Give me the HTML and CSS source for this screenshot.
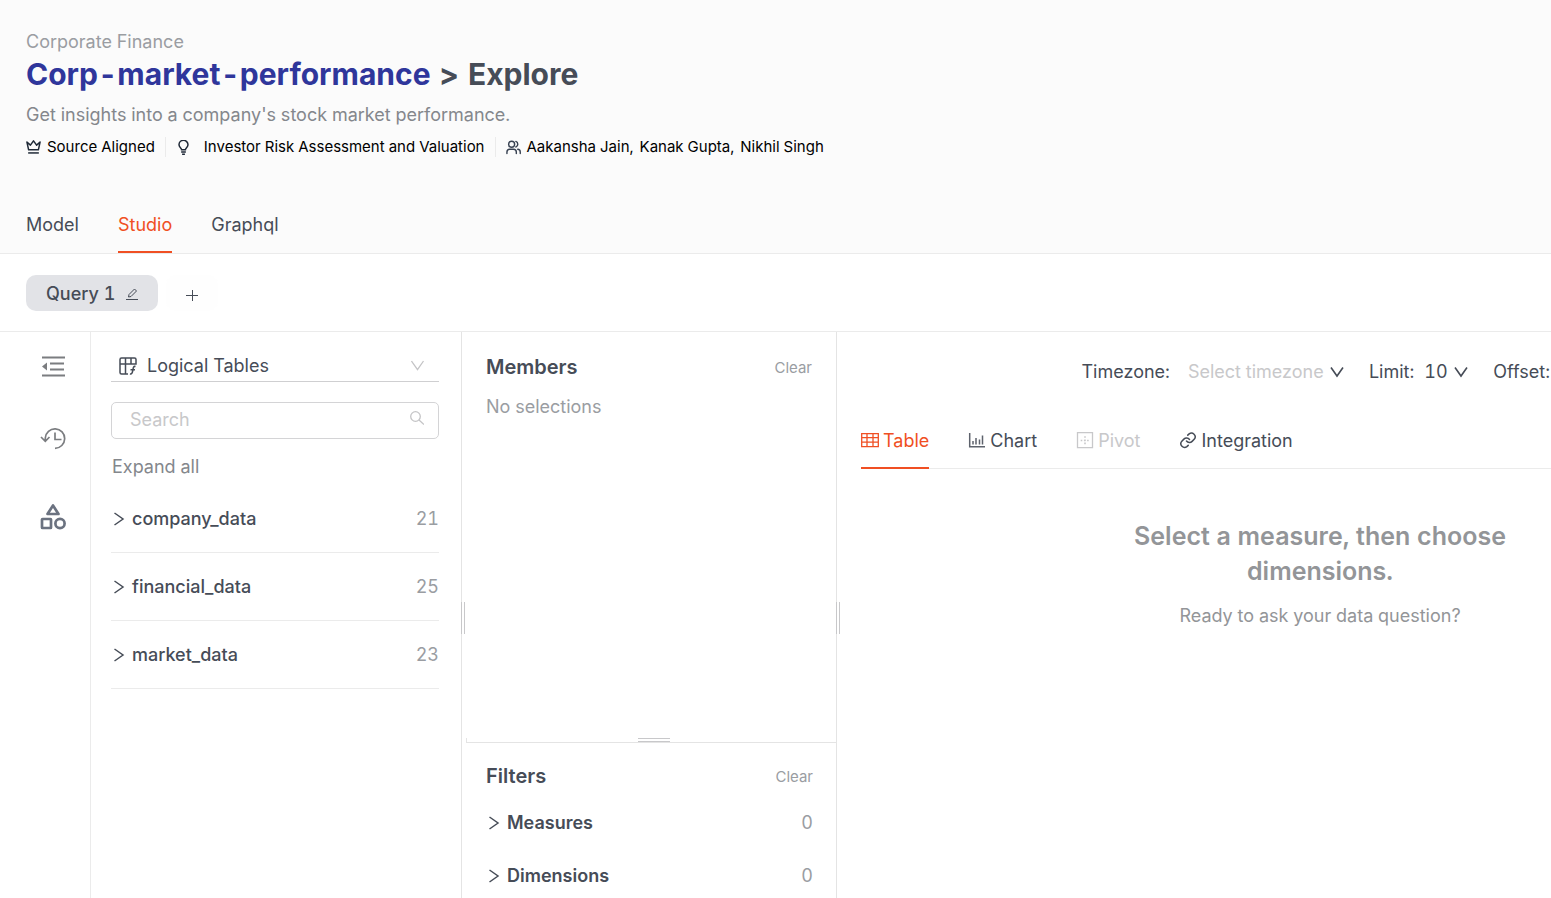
FILE: index.html
```html
<!DOCTYPE html>
<html lang="en">
<head>
<meta charset="utf-8">
<title>Corp-market-performance - Explore</title>
<link rel="stylesheet" href="styles.css">
</head>
<body>
<header class="page-header">
  <p class="domain">Corporate Finance</p>
  <h1 class="title"><a class="title-link" href="#">Corp-market-performance</a><span>&gt;</span><span>Explore</span></h1>
  <p class="description">Get insights into a company's stock market performance.</p>
  <ul class="meta">
    <li class="meta-item">
      <svg class="icon-15" viewBox="0 0 16 16" fill="none" stroke="#1f2937" stroke-width="1.6" stroke-linejoin="round"><path d="M1 2.200 2.800 10.500h10.400L15 2.200l-3.700 3.300L8 .900 4.700 5.500z"/><path d="M2.300 13.800h11.400"/></svg>
      <span>Source Aligned</span>
    </li>
    <li class="meta-item meta-wide">
      <svg class="icon-15" viewBox="0 0 16 16" fill="none" stroke="#1f2937" stroke-width="1.600"><path d="M6 10.300c0-1.500-2.800-2.400-2.800-5.200a4.800 4.800 0 0 1 9.600 0c0 2.800-2.800 3.700-2.800 5.200z"/><path d="M5.500 12.800h5M6.500 15.200h3"/></svg>
      <span>Investor Risk Assessment and Valuation</span>
    </li>
    <li class="meta-item">
      <svg class="icon-15" viewBox="0 0 16 16" fill="none" stroke="#374151" stroke-width="1.500" stroke-linecap="round"><circle cx="6" cy="4.500" r="3.200"/><path d="M1 14.500v-1.700a3 3 0 0 1 3-3h4a3 3 0 0 1 3 3v1.700M10.500 1.500a3.200 3.200 0 0 1 0 6M12.500 9.900a3 3 0 0 1 2.700 3v1.600"/></svg>
      <span>Aakansha Jain,</span><span>Kanak Gupta,</span><span>Nikhil Singh</span>
    </li>
  </ul>
  <nav class="tabs">
    <a class="tab" href="#">Model</a>
    <a class="tab tab-active" href="#">Studio</a>
    <a class="tab" href="#">Graphql</a>
  </nav>
</header>

<div class="query-bar">
  <button class="query-pill" type="button">Query 1
    <svg class="icon-12" viewBox="0 0 12 12" fill="none" stroke="#464c57"><path d="M0 11.500h12M2.500 9l.5-2.500L8.500 1l2 2L5 8.500z"/></svg>
  </button>
  <button class="query-add" type="button" aria-label="Add query">
    <svg class="icon-12" viewBox="0 0 12 12" stroke="#464c57"><path d="M0 6.500h12M6.500 1v11"/></svg>
  </button>
</div>

<main class="workspace">
  <aside class="rail">
    <button class="rail-button" type="button" aria-label="Collapse panel">
      <svg class="icon-26" viewBox="0 0 26 26" fill="none" stroke="#7b7d80" stroke-width="2"><path d="M2 3.500h23M10 9.500h14M10 15.500h14M2 21.500h23"/><path d="M7 8.500v8l-5-4z" fill="#7b7d80" stroke="none"/></svg>
    </button>
    <button class="rail-button" type="button" aria-label="History">
      <svg class="icon-26" viewBox="0 0 26 26" fill="none" stroke="#7b7d80" stroke-width="1.700"><path d="M5.300 15.500V12A9.700 9.700 0 1 1 15 22.300M1 11l4.300 4.300L9.500 11M15 6.500v7h6.500"/></svg>
    </button>
    <button class="rail-button rail-objects" type="button" aria-label="Saved">
      <svg class="icon-26" viewBox="0 0 26 26" fill="none" stroke="#6b7280" stroke-width="2.700" stroke-linejoin="round"><path d="M13 1.500 18.500 10H7.500z"/><rect x="2" y="15" width="9" height="9" rx=".5"/><circle cx="20" cy="19.500" r="4.600"/></svg>
    </button>
  </aside>

  <section class="catalog">
    <label class="source">
      <svg class="icon-20" viewBox="0 0 20 20" fill="none" stroke="#464c57" stroke-width="1.500"><path d="M10 18H3.500A1.500 1.500 0 0 1 2 16.500v-13A1.500 1.500 0 0 1 3.500 2h13A1.500 1.500 0 0 1 18 3.500V8H2M7.500 2v16M13 2v6"/><path d="M17.500 10.500c-2.500-.8-2.300 2.500-2.800 4.500s-1 3.400-2.700 2.800M12.500 13.800h4.500"/></svg>
      <select class="source-select" aria-label="Source"><option>Logical Tables</option></select>
      <svg class="icon-14" viewBox="0 0 14 14" fill="none" stroke="#c4c4c6" stroke-width="1.300"><path d="M.5 2 6.500 10.500 12.500 2"/></svg>
    </label>
    <label class="search">
      <input class="search-input" type="text" placeholder="Search" aria-label="Search">
      <svg class="icon-14 search-icon" viewBox="0 0 14 14" fill="none" stroke="#c4c4c6" stroke-width="1.300"><circle cx="5.500" cy="5.500" r="4.800"/><path d="m9 9 5 4.500"/></svg>
    </label>
    <button class="expand" type="button">Expand all</button>
    <ul class="table-list">
      <li><button class="row row-table" type="button"><svg class="icon-14" viewBox="0 0 14 14" fill="none" stroke="#464c57" stroke-width="1.500"><path d="M3.500 1 12 7 3.500 13"/></svg><span>company_data</span><span class="count">21</span></button></li>
      <li><button class="row row-table" type="button"><svg class="icon-14" viewBox="0 0 14 14" fill="none" stroke="#464c57" stroke-width="1.500"><path d="M3.500 1 12 7 3.500 13"/></svg><span>financial_data</span><span class="count">25</span></button></li>
      <li><button class="row row-table" type="button"><svg class="icon-14" viewBox="0 0 14 14" fill="none" stroke="#464c57" stroke-width="1.500"><path d="M3.500 1 12 7 3.500 13"/></svg><span>market_data</span><span class="count">23</span></button></li>
    </ul>
  </section>

  <div class="splitter"><span class="grip"></span></div>

  <div class="selection">
    <section class="members">
      <div class="panel-head"><h2 class="panel-title">Members</h2><button class="clear" type="button">Clear</button></div>
      <p class="empty-note">No selections</p>
    </section>
    <div class="splitter-row"><span class="grip-row"></span></div>
    <section class="filters">
      <div class="panel-head"><h2 class="panel-title">Filters</h2><button class="clear" type="button">Clear</button></div>
      <button class="row row-filter" type="button"><svg class="icon-14" viewBox="0 0 14 14" fill="none" stroke="#464c57" stroke-width="1.500"><path d="M3.500 1 12 7 3.500 13"/></svg><span>Measures</span><span class="count">0</span></button>
      <button class="row row-filter" type="button"><svg class="icon-14" viewBox="0 0 14 14" fill="none" stroke="#464c57" stroke-width="1.500"><path d="M3.500 1 12 7 3.500 13"/></svg><span>Dimensions</span><span class="count">0</span></button>
    </section>
  </div>

  <div class="splitter"><span class="grip"></span></div>

  <section class="results">
    <div class="results-inner">
      <div class="toolbar">
        <label class="field"><span class="field-label field-label-wide">Timezone:</span><select class="field-select field-muted"><option>Select timezone</option></select><svg class="icon-14" viewBox="0 0 14 14" fill="none" stroke="#464c57" stroke-width="1.600"><path d="M1 2.500 7 11 13 2.500"/></svg></label>
        <label class="field"><span class="field-label">Limit:</span><select class="field-select"><option>10</option></select><svg class="icon-14" viewBox="0 0 14 14" fill="none" stroke="#464c57" stroke-width="1.600"><path d="M1 2.500 7 11 13 2.500"/></svg></label>
        <label class="field"><span class="field-label">Offset:</span><input class="field-input" type="text"></label>
      </div>
      <nav class="tabs tabs-results">
        <button class="tab tab-icon tab-active" type="button"><svg class="icon-18" viewBox="0 0 18 18" fill="none" stroke="#f04f23" stroke-width="1.300"><path d="M.7 1.700h16.600v13H.7zM.7 5.700h16.600M.7 10.200h16.600M6 1.700v13M12 1.700v13"/></svg>Table</button>
        <button class="tab tab-icon" type="button"><svg class="icon-18" viewBox="0 0 18 18" fill="none" stroke="#5d626c" stroke-width="1.500"><path d="M1.700 1v13.700H17M5 12.500V9M8 12.500V6M11.500 12.500V7.500M14.500 12.500v-9"/></svg>Chart</button>
        <button class="tab tab-icon tab-disabled" type="button" disabled><svg class="icon-18" viewBox="0 0 18 18" fill="none" stroke="#c8c8ca" stroke-width="1.300"><path d="M1.500.700h15v15h-15z"/><path stroke-width="1.600" stroke-dasharray="1.600 1.600" d="M9 4.200v8.500M4.700 8.500h8.500"/></svg>Pivot</button>
        <button class="tab tab-icon" type="button"><svg class="icon-18" viewBox="0 0 24 24" fill="none" stroke="#464c57" stroke-width="2" stroke-linecap="round"><path d="M10 12a5 5 0 0 0 7.500.500l3-3a5 5 0 0 0-7-7L11.700 4.200M14 10a5 5 0 0 0-7.500-.500l-3 3a5 5 0 0 0 7 7l1.800-1.700"/></svg>Integration</button>
      </nav>
      <div class="placeholder">
        <h2 class="placeholder-title">Select a measure, then choose dimensions.</h2>
        <p class="placeholder-note">Ready to ask your data question?</p>
      </div>
    </div>
  </section>
</main>
</body>
</html>
```
FILE: styles.css
```css
* { box-sizing: border-box; }

body {
  margin: 0;
  height: 100vh;
  display: flex;
  flex-direction: column;
  overflow: hidden;
  background: #fff;
  color: #464c57;
  font: 400 18px/28px Inter, "Liberation Sans", sans-serif;
  font-feature-settings: "tnum";
}

h1, h2, p, ul { margin: 0; padding: 0; }
ul { list-style: none; }
a { color: inherit; text-decoration: none; }
svg { flex: none; display: block; }

button, select, input {
  margin: 0;
  padding: 0;
  border: 0;
  background: none;
  color: inherit;
  font: inherit;
  font-feature-settings: inherit;
  appearance: none;
  outline: 0;
}

.icon-12 { width: 12px; height: 12px; }
.icon-14 { width: 14px; height: 14px; }
.icon-15 { width: 15px; height: 15px; }
.icon-18 { width: 18px; height: 18px; }
.icon-20 { width: 20px; height: 20px; }
.icon-26 { width: 26px; height: 26px; }

/* Header */
.page-header {
  flex: none;
  padding: 28px 26px 0;
  background: #fbfbfb;
  border-bottom: 1px solid #ebebeb;
}
.domain { color: #9a9da2; }
.title {
  display: flex;
  gap: 9px;
  font-size: 30px;
  line-height: 36px;
  font-weight: 700;
}
.title-link { color: #2f369b; }
.description { margin-top: 9px; color: #84878c; }
.meta {
  display: flex;
  margin-top: 8px;
  color: #000;
  font-size: 15px;
  line-height: 20px;
}
.meta-item { display: flex; align-items: center; gap: 6px; }
.meta-item + .meta-item {
  margin-left: 10px;
  padding-left: 10px;
  border-left: 1px solid #ebebeb;
}
.meta-wide { gap: 13px; }

.tabs { display: flex; gap: 39px; }
.page-header .tabs { margin-top: 42px; }
.tab {
  display: block;
  padding: 12px 0;
  border-bottom: 2px solid transparent;
}
.tab-active { color: #f04f23; border-color: #f04f23; }

/* Query bar */
.query-bar {
  flex: none;
  display: flex;
  gap: 8px;
  padding: 21px 26px 20px;
  border-bottom: 1px solid #ebebeb;
}
.query-pill {
  display: flex;
  align-items: center;
  gap: 11px;
  height: 36px;
  padding: 1px 20px 0;
  border-radius: 10px;
  background: #e2e3e7;
  font-weight: 500;
}
.query-add {
  display: flex;
  align-items: center;
  justify-content: center;
  width: 52px;
  height: 36px;
  padding-top: 4px;
  border-radius: 10px;
  background: #fefefe;
}

/* Workspace */
.workspace { flex: 1; display: flex; min-height: 0; }
.rail {
  flex: none;
  width: 91px;
  display: flex;
  flex-direction: column;
  align-items: center;
  gap: 46px;
  padding: 22px 0 0 16px;
  border-right: 1px solid #ebebeb;
}
.rail-objects { margin-top: 6px; }

.catalog { flex: none; width: 370px; padding: 20px 22px 0 20px; }
.source {
  display: flex;
  align-items: center;
  padding: 0 14px 1px 7px;
  border-bottom: 1px solid #cfcfd1;
}
.source-select { flex: 1; padding-left: 9px; }
.search {
  display: flex;
  align-items: center;
  height: 37px;
  margin-top: 20px;
  padding: 0 14px 2px 18px;
  border: 1px solid #d4d4d6;
  border-radius: 5px;
}
.search-input { flex: 1; min-width: 0; line-height: 28px; }
.search-input::placeholder { color: #c8c8ca; opacity: 1; }
.search-icon { margin-bottom: 4px; }
.expand { display: block; margin: 14px 0 0 1px; color: #84878c; }
.table-list { margin-top: 4px; }
.row { display: flex; align-items: center; width: 100%; }
.row-table {
  gap: 7px;
  height: 68px;
  border-bottom: 1px solid #ebebeb;
  font-weight: 500;
}
.count { margin-left: auto; color: #9a9da2; font-weight: 400; }

.splitter {
  flex: none;
  display: flex;
  align-items: center;
  width: 5px;
  margin-right: -4px;
  border-left: 1px solid #e4e4e4;
}
.grip {
  width: 4px;
  height: 32px;
  margin: 5px 0 0 -1px;
  border: solid #c8c8ca;
  border-width: 0 1px;
}

.selection {
  flex: none;
  width: 374px;
  display: flex;
  flex-direction: column;
}
.members { flex: 1; padding: 20px 24px 0; }
.panel-head { display: flex; align-items: center; justify-content: space-between; }
.panel-title { font-size: 20px; line-height: 28px; font-weight: 600; }
.clear { padding-top: 2px; color: #9a9da2; font-size: 15px; }
.empty-note { margin-top: 11px; color: #9a9da2; }
.splitter-row {
  flex: none;
  display: flex;
  justify-content: center;
  height: 5px;
  margin-left: 4px;
  padding-left: 4px;
  border: solid #e4e4e4;
  border-width: 0 0 1px 1px;
}
.grip-row {
  width: 32px;
  height: 4px;
  border: solid #c8c8ca;
  border-width: 1px 0;
}
.filters { flex: 0 0 27.4%; min-height: 0; overflow: hidden; padding: 18px 23px 0 24px; }
.row-filter { height: 53px; gap: 7px; font-weight: 600; }
.filters .panel-head { margin-bottom: 6px; }

/* Results */
.results { flex: 1; min-width: 0; overflow: hidden; padding: 26px 24px 0; }
.results-inner { min-width: 918px; }
.toolbar { display: flex; justify-content: flex-end; gap: 25px; }
.field { display: flex; align-items: center; gap: 6px; }
.field-label { margin-right: 4px; }
.field-label-wide { margin-right: 12px; }
.field-muted { color: #c8c8ca; }
.field-input { width: 219px; }
.tabs-results { margin-top: 29px; border-bottom: 1px solid #ebebeb; }
.tab-icon { display: flex; align-items: center; gap: 4px; margin-bottom: -1px; }
.tab-disabled { color: #c8c8ca; }
.placeholder {
  max-width: 400px;
  margin: 50px auto 0;
  color: #939598;
  text-align: center;
}
.placeholder-title { font-size: 25px; line-height: 35px; font-weight: 600; }
.placeholder-note { margin-top: 13px; }
```
